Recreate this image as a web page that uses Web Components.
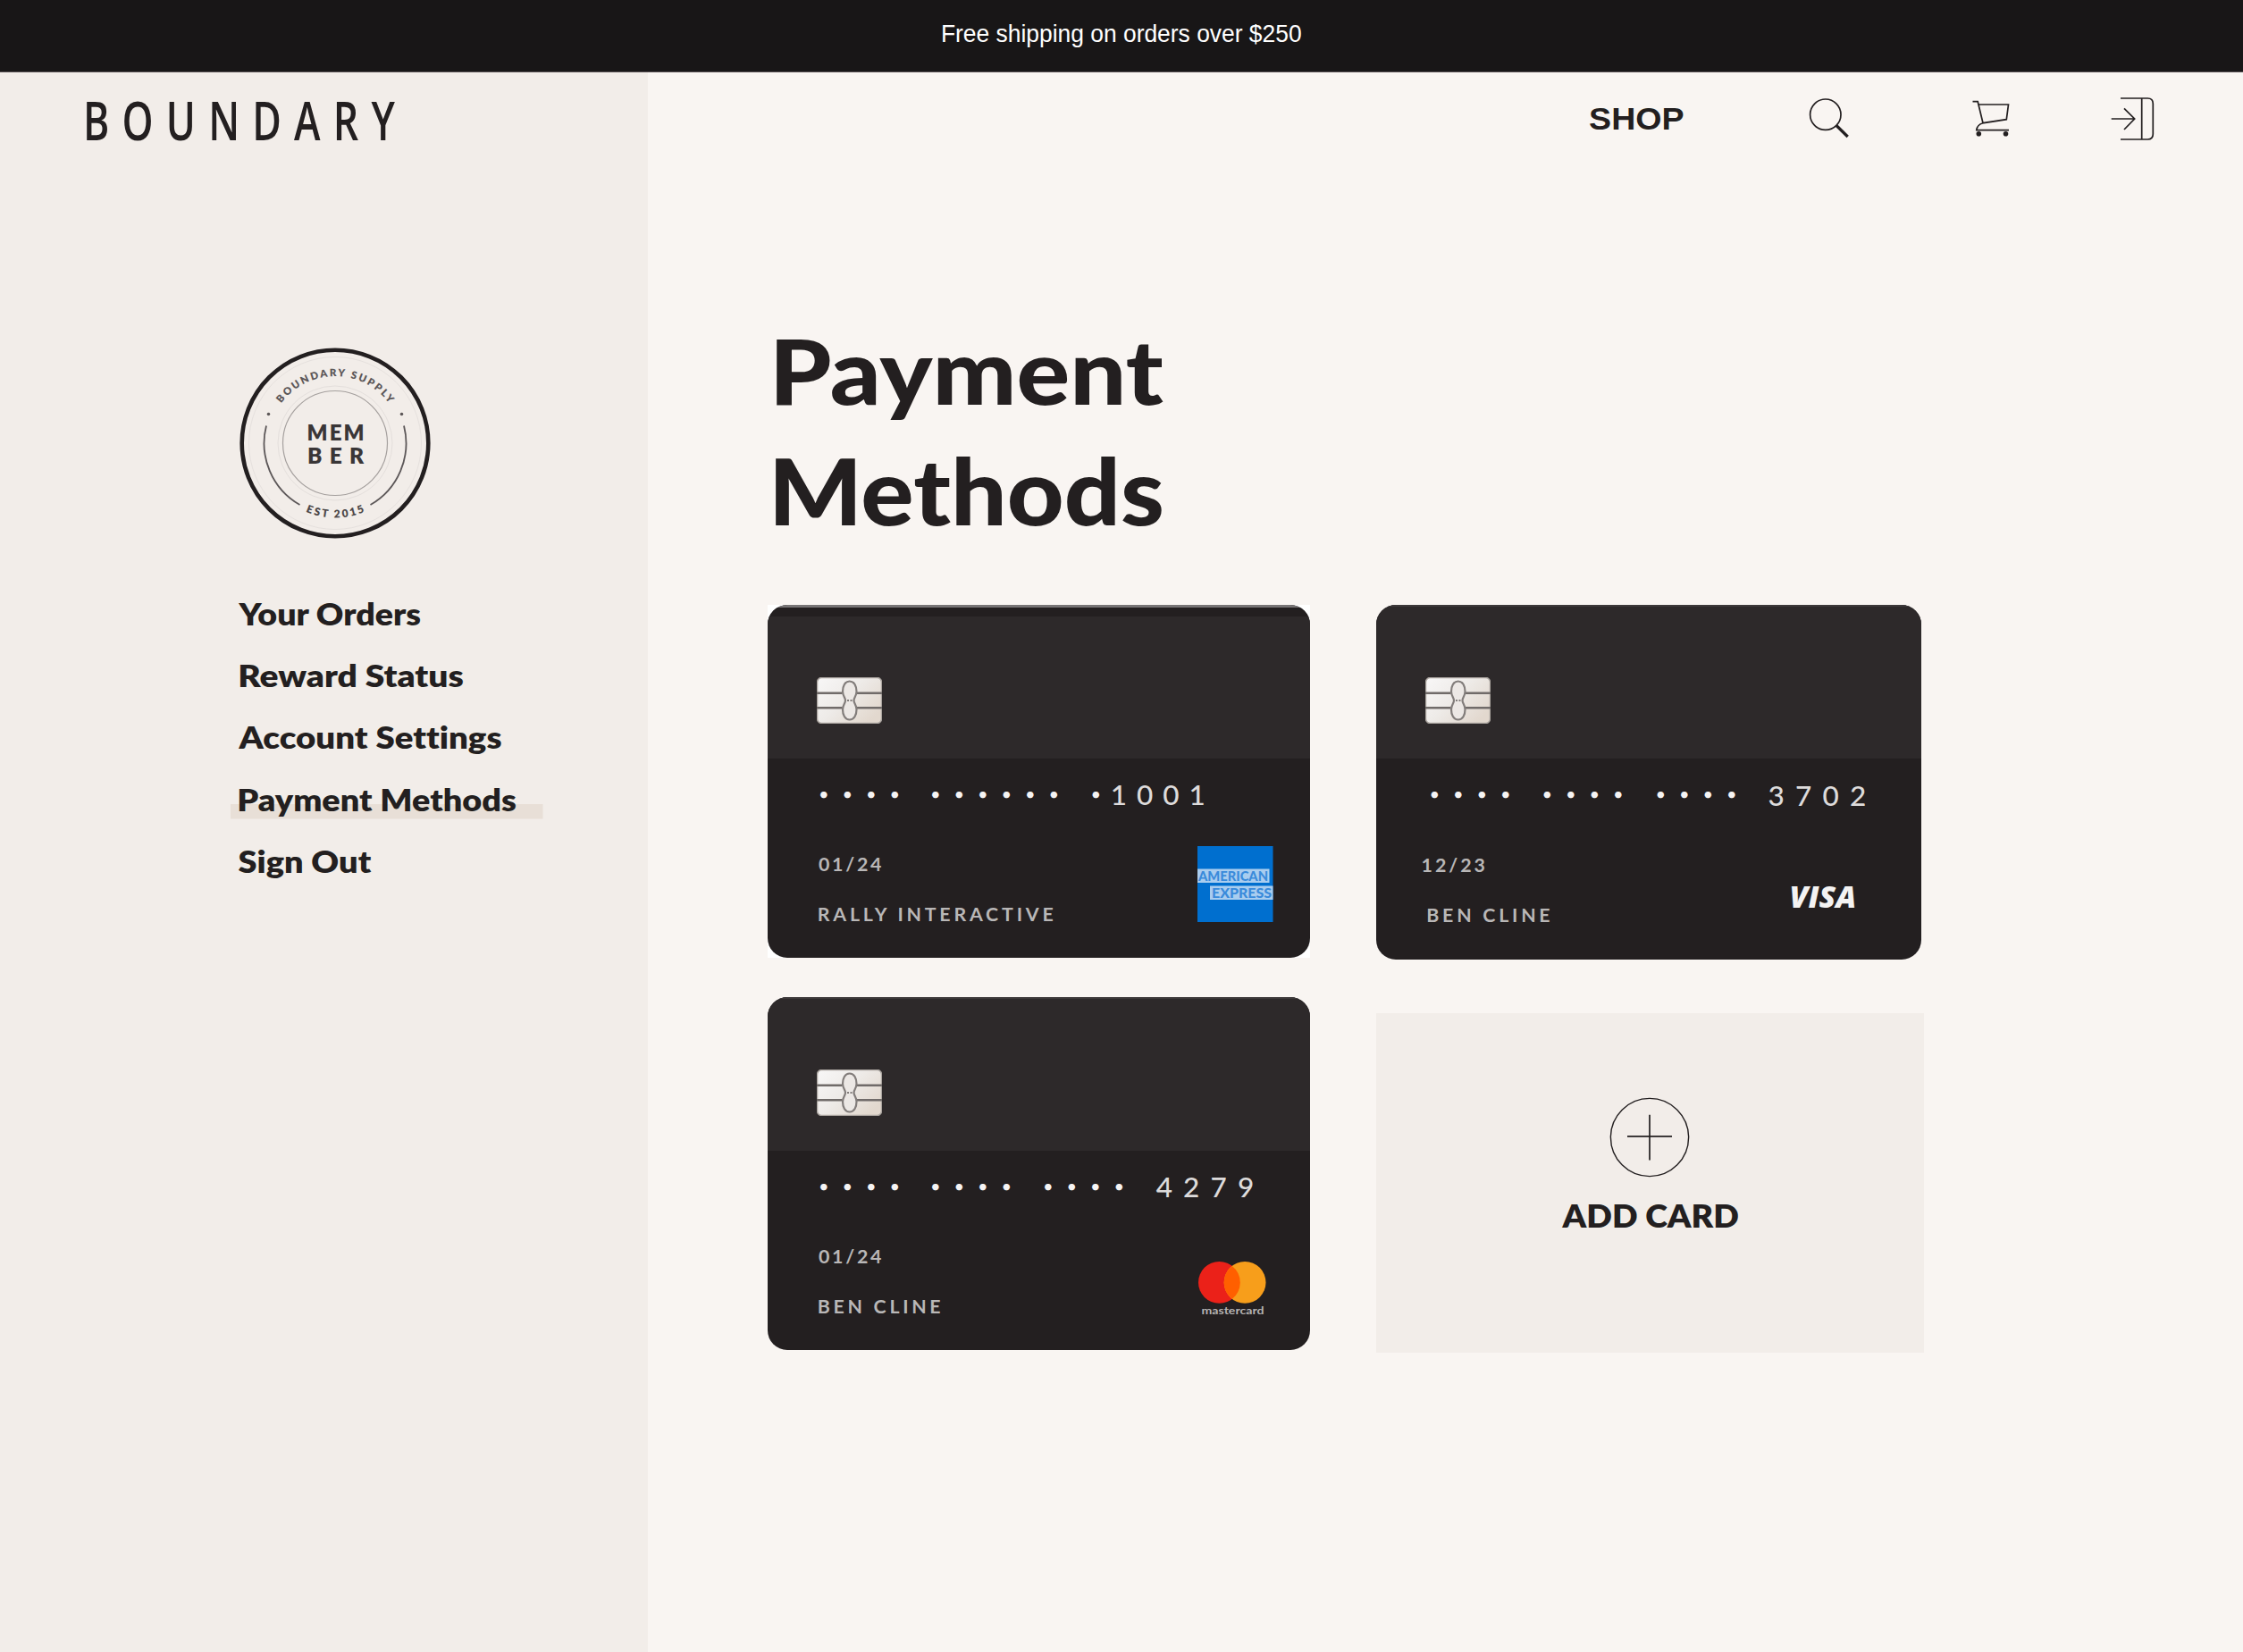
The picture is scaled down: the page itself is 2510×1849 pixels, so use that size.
<!DOCTYPE html>
<html lang="en">
<head>
<meta charset="utf-8">
<title>Boundary – Payment Methods</title>
<style>
body{margin:0;background:#f9f5f2;color:#231f20;font-family:Lato,"Open Sans",sans-serif}
</style>
</head>
<body>
<payment-page></payment-page>
<script>
const shadow = (el, html) => { el.attachShadow({mode:'open'}).innerHTML = html; };

/* One line of text whose box is its ink: cap height tall, w wide.
   With sx the glyphs keep that horizontal scale and tracking fills the width. */
class InkText extends HTMLElement {
  connectedCallback() {
    if (this.shadowRoot) return;
    const w = +this.getAttribute('w'), cap = +this.getAttribute('cap');
    const ref = this.getAttribute('ref') || 'H';
    const text = this.textContent.trim();
    const cs = getComputedStyle(this);
    const ctx = document.createElement('canvas').getContext('2d');
    const setFont = s => ctx.font = `${cs.fontStyle} ${cs.fontWeight} ${s}px ${cs.fontFamily}`;
    setFont(200);
    ctx.letterSpacing = '0.01px';
    const r = ctx.measureText(ref);
    const size = cap * 200 / (r.actualBoundingBoxAscent + r.actualBoundingBoxDescent);
    const k = size / 200;
    const m = ctx.measureText(text);
    const left = m.actualBoundingBoxLeft * k;
    const ink = (m.actualBoundingBoxLeft + m.actualBoundingBoxRight) * k;
    let sx = 1, ls = 0;
    if (this.hasAttribute('sx')) {
      sx = +this.getAttribute('sx');
      ls = text.length > 1 ? (w / sx - ink) / (text.length - 1) : 0;
    } else sx = w / ink;
    const asc = m.fontBoundingBoxAscent * k, desc = m.fontBoundingBoxDescent * k;
    const base = (cap + asc - desc) / 2;
    const ty = cap - r.actualBoundingBoxDescent * k - base;
    shadow(this, `<style>
      :host{display:block;flex:none;width:${w}px;height:${cap}px;white-space:nowrap}
      span{display:block;width:max-content;font-size:${size}px;line-height:${cap}px;letter-spacing:${ls}px;font-variant-ligatures:none;
        transform-origin:0 0;transform:translate(${left * sx}px,${ty}px) scaleX(${sx})}
      </style><span><slot></slot></span>`);
  }
}

class ShippingBanner extends HTMLElement {
  constructor() { super(); shadow(this, `<style>
    :host{display:flex;justify-content:center;box-sizing:border-box;height:81px;background:#181617;border-bottom:1px solid #574f51;color:#fff;
      font-family:"Liberation Sans",Inter,sans-serif}
    ink-text{margin-top:28px}
    </style><ink-text w="401" cap="19">${this.getAttribute('message')}</ink-text>`); }
}

class MemberBadge extends HTMLElement {
  constructor() { super(); shadow(this, `<style>
    :host{display:block;width:216px;height:216px}svg{display:block}text{font-family:Lato,sans-serif;font-weight:800;fill:#3a3637}
    </style><svg width="216" height="216" viewBox="-108 -108 216 216" fill="none">
    <defs><path id="a" d="M-75 0A75 75 0 0 1 75 0"/><path id="b" d="M-83.500 0A83.500 83.500 0 0 0 83.500 0"/></defs>
    <circle r="104.3" stroke="#231f20" stroke-width="4.6"/>
    <circle r="96.5" stroke="#e6e1de"/><circle r="64" stroke="#e4dfdc"/>
    <circle r="58.5" stroke="#a5a09e" stroke-width="1.2"/>
    <path d="M-77 -19.5A79.4 79.4 0 0 0 -39.5 69M77 -19.5A79.4 79.4 0 0 1 39.5 69" stroke="#5c5758" stroke-width="1.8"/>
    <circle cx="-74.5" cy="-32.5" r="1.8" fill="#5c5758"/><circle cx="74.5" cy="-32.5" r="1.8" fill="#5c5758"/>
    <text font-size="11.500" text-anchor="middle" style="fill:#5c5758" textLength="140"><textPath href="#a" startOffset="50%" textLength="140">BOUNDARY SUPPLY</textPath></text>
    <text font-size="12" text-anchor="middle" style="fill:#4c4748" textLength="68"><textPath href="#b" startOffset="50%" textLength="68">EST 2015</textPath></text>
    <text x="-31.5" y="-3.5" font-size="24" textLength="64">MEM</text>
    <text x="-31" y="23.3" font-size="24.5" textLength="63">BER</text>
    </svg>`); }
}

class AccountLink extends HTMLElement {
  constructor() { super();
    const x = this.getAttribute('x') || 0;
    shadow(this, `<style>
    :host{display:block;height:25.3px;margin-bottom:44.03px;font-weight:800}
    :host([active]){background:linear-gradient(#e8dfd7,#e8dfd7) 0 17.500px/349.5px 16.5px no-repeat;padding:0 0 9.5px 8.5px;margin-left:-8.5px;margin-bottom:34.53px}
    ink-text{margin-left:${x}px}
    </style><ink-text w="${this.getAttribute('w')}" cap="25.3">${this.getAttribute('label')}</ink-text>`); }
}

class AccountSidebar extends HTMLElement {
  constructor() { super(); shadow(this, `<style>
    :host{display:flex;flex-direction:column;flex:none;width:725px;background:#f2ede9;height:1768px}
    .logo{margin:33.500px 0 0 97px;font-family:"Open Sans",sans-serif;font-weight:600}
    member-badge{margin:231px 0 0 266.500px}
    nav{margin:70.700px 0 0 266.500px}
    </style>
    <ink-text class="logo" w="345" cap="42.500" sx=".75">BOUNDARY</ink-text>
    <member-badge></member-badge>
    <nav>
      <account-link w="204" label="Your Orders"></account-link>
      <account-link x="2" w="249" label="Reward Status"></account-link>
      <account-link w="293.7" label="Account Settings"></account-link>
      <account-link active x="1.6" w="309" label="Payment Methods"></account-link>
      <account-link w="148.3" label="Sign Out"></account-link>
    </nav>`); }
}

class SiteTools extends HTMLElement {
  constructor() { super(); shadow(this, `<style>
    :host{display:flex;align-items:flex-start;padding:24px 0 0 1054px;height:56px;font-weight:800}
    svg{display:block;flex:none;fill:none;stroke:#231f20;stroke-width:1.7}
    .shop{margin-top:15px;font-family:"Liberation Sans",sans-serif;font-weight:700}.s{margin-left:136.500px}.c{margin-left:134px}.e{margin-left:104px}
    </style>
    <ink-text class="shop" w="104.5" cap="25">SHOP</ink-text>
    <svg class="s" width="50" height="56" viewBox="2020 105 50 56"><circle cx="2042.8" cy="128.2" r="17.2"/><path d="M2055 140.5L2067.7 153" stroke-width="3.2"/></svg>
    <svg class="c" width="50" height="56" viewBox="2204 105 50 56"><path d="M2207.5 113.7H2213.2L2219 137.7L2245.3 133.7L2247.5 117H2214M2219 137.7Q2212.5 139.5 2211.8 145.6H2248"/><g fill="#231f20" stroke="none"><circle cx="2214.3" cy="149.8" r="2.8"/><circle cx="2244.5" cy="149.8" r="2.8"/></g></svg>
    <svg class="e" width="56" height="56" viewBox="2358 105 56 56" stroke-width="1.5"><path d="M2373 110H2403.3Q2409.3 110 2409.3 116V150Q2409.3 156 2403.3 156H2373M2396.7 110V156M2362.7 133H2388.5M2377 121.3L2388.7 133L2377 145"/></svg>`); }
}

const brands = {
  amex: `<svg width="85" height="86" viewBox="0 0 85 86"><rect width="84.500" height="85" fill="#006fcf"/>
    <rect y="25.5" width="80.5" height="15.5" fill="#a9cdef"/><rect x="14" y="44.500" width="70.500" height="15.500" fill="#a9cdef"/>
    <g font-family="Lato,sans-serif" font-weight="900" font-size="15.500" fill="#3a8bdb"><text x="1" y="38.700" textLength="78" lengthAdjust="spacingAndGlyphs">AMERICAN</text><text x="16" y="57.800" textLength="67" lengthAdjust="spacingAndGlyphs">EXPRESS</text></g></svg>`,
  visa: `<ink-text w="70" cap="23.500" style="margin-left:2px;font:italic 800 20px 'Open Sans',sans-serif;color:#f4f3f3">VISA</ink-text>`,
  mastercard: `<svg width="76" height="68" viewBox="0 0 76 68"><circle cx="23.4" cy="23.4" r="23.4" fill="#eb2119"/><circle cx="52.1" cy="23.4" r="23.4" fill="#f79e1b"/><path d="M37.750 4.920A23.400 23.400 0 0 1 37.750 41.880A23.400 23.400 0 0 1 37.750 4.920Z" fill="#ff5f00"/>
    <text x="3.500" y="58.500" font-family="Lato,sans-serif" font-weight="700" font-size="12" fill="#b5b3b3" textLength="70" lengthAdjust="spacingAndGlyphs">mastercard</text></svg>`
};

class CreditCard extends HTMLElement {
  constructor() { super();
    const a = n => this.getAttribute(n);
    /* groups: "count:left" pairs of masked digits, then the visible ones */
    let x = 0;
    const groups = a('groups').split(' ').map(g => {
      const [n, l] = g.split(':').map(Number), w = (n - 1) * 26.5 + 7.5;
      const s = `<ink-text ref="•" style="margin:${a('doty')}px 0 0 ${l - x}px" w="${w}" cap="7.5" sx="1">${'•'.repeat(n)}</ink-text>`;
      x = l + w; return s;
    }).join('');
    const [dw, dl] = a('date-box').split(' '), [nw, nl] = a('name-box').split(' ');
    const [lw, ll] = a('last-box').split(' ').map(Number);
    const [bx, by] = a('brand-at').split(' ');
    shadow(this, `<style>
    :host{display:block;width:${a('w')}px;height:${a('h')}px}
    .card{height:100%;border-radius:22px;overflow:hidden;background:#231f20;box-sizing:border-box;display:flex;flex-direction:column}
    .top{height:${a('split')}px;flex:none;background:#2d292a;box-sizing:border-box;padding:${a('chipy')}px 0 0 ${a('chipx')}px;border-top:2px solid #3d393a}
    :host([plate]){background:linear-gradient(#fff,#fff) 0 0/610px 398px no-repeat}
    :host([plate]) .top{border-top:3px solid #777475;background:linear-gradient(#231f20 10px,#2d292a 10px);padding-top:${a('chipy') - 1}px}
    .chip{display:block}
    .num{display:flex;height:82px;flex:none;color:#f6f4f4}
    .num ink-text:last-child{color:#dddbdb;font-weight:500}
    .foot{display:flex;flex:1;color:#b9b7b7}
    .foot>div{flex:none;width:${bx}px;font-weight:700}
    .foot>.brand{width:auto;margin-top:${by}px}.brand svg{display:block}
    </style>
    <div class="card">
      <div class="top"><svg class="chip" width="73" height="52" viewBox="0 0 73 52"><defs><linearGradient id="g" x2="1" y2=".7"><stop stop-color="#f8f7f7"/><stop offset=".5" stop-color="#eeebe8"/><stop offset="1" stop-color="#e2d8ce"/></linearGradient></defs>
        <rect x=".5" y=".5" width="72" height="51" rx="5" fill="url(#g)" stroke="#aaa49f" stroke-width="1.500"/>
        <path d="M0 17.700H28.500M45 17.700H73M0 34.300H28.500M45 34.300H73" stroke="#706b69" stroke-width="2.600"/>
        <path d="M36.700 4.500C42 4.500 44.500 10 44.500 16C44.500 21 41.500 22.500 41.500 26C41.500 29.500 44.500 31 44.500 36C44.500 42 42 47.500 36.700 47.500C31.500 47.500 29 42 29 36C29 31 32 29.500 32 26C32 22.500 29 21 29 16C29 10 31.500 4.500 36.700 4.500Z" fill="#ece8e5" stroke="#827d7b" stroke-width="2.200"/>
        <path d="M34 26H39.500" stroke="#827d7b" stroke-width="2" stroke-dasharray="2 1.500"/></svg></div>
      <div class="num">${groups}<ink-text style="margin:${+a('doty') - 7.5}px 0 0 ${ll - x}px" w="${lw}" cap="22.7" sx="1">${a('last')}</ink-text></div>
      <div class="foot"><div>
        <ink-text style="margin:${a('datey')}px 0 0 ${dl}px" w="${dw}" cap="15.500" sx="1">${a('date')}</ink-text>
        <ink-text style="margin:40.500px 0 0 ${nl}px" w="${nw}" cap="15.500" sx="1">${a('name')}</ink-text></div>
        <div class="brand">${brands[a('brand')]}</div></div>
    </div>`); }
}

class AddCard extends HTMLElement {
  constructor() { super(); shadow(this, `<style>
    :host{display:flex;flex-direction:column;align-items:center;width:613px;height:380.5px;background:#f2ede9;font-weight:800}
    svg{margin-top:94.500px;display:block}
    ink-text{margin-top:30.300px}
    </style><svg width="90" height="90" viewBox="-45 -45 90 90" fill="none" stroke="#231f20" stroke-width="1.400"><circle r="43.600"/><path d="M-25 -1.200H25M0 -25.200V25.500" stroke-width="1.700"/></svg>
    <ink-text w="197" cap="25.500">ADD CARD</ink-text>`); }
}

class PaymentPage extends HTMLElement {
  constructor() { super(); shadow(this, `<style>
    :host{display:block;width:2510px;height:1849px;overflow:hidden}
    .body{display:flex}
    h1{margin:218px 0 0 144px;font-weight:900;font-size:20px}
    h1 ink-text+ink-text{margin:60.500px 0 0 -1.500px}
    .cards{display:flex;gap:74px;margin:89.300px 0 0 134px}
    .col{display:flex;flex-direction:column}
    .col:first-child{gap:44.300px}.col:last-child{gap:60px}
    </style>
    <shipping-banner message="Free shipping on orders over $250"></shipping-banner>
    <div class="body">
      <account-sidebar></account-sidebar>
      <main>
        <site-tools></site-tools>
        <h1><ink-text w="432.500" cap="74">Payment</ink-text><ink-text w="432" cap="74.500">Methods</ink-text></h1>
        <section class="cards">
          <div class="col">
            <credit-card plate w="606.500" h="394.700" split="172" chipx="54.700" chipy="78.500" groups="4:59 6:184 1:363.500" doty="37.700"
              last="1001" last-box="101.500 386.200" date="01/24" date-box="69.500 57.500" datey="28.800" name="RALLY INTERACTIVE" name-box="262.500 57.500" brand="amex" brand-at="481 16"></credit-card>
            <credit-card w="606.500" h="395" split="171.400" chipx="54.700" chipy="78.500" groups="4:59 4:184 4:310" doty="38"
              last="4279" last-box="107.700 434.800" date="01/24" date-box="69.500 57.500" datey="29" name="BEN CLINE" name-box="135.500 57.500" brand="mastercard" brand-at="481.500 42"></credit-card>
          </div>
          <div class="col">
            <credit-card w="610.500" h="396.700" split="171.400" chipx="55.300" chipy="78.500" groups="4:62 4:188 4:315" doty="38.500"
              last="3702" last-box="107 440.300" date="12/23" date-box="69 52.500" datey="30" name="BEN CLINE" name-box="136 58.500" brand="visa" brand-at="463.500 62"></credit-card>
            <add-card></add-card>
          </div>
        </section>
      </main>
    </div>`); }
}

customElements.define('payment-page', PaymentPage);
customElements.define('shipping-banner', ShippingBanner);
customElements.define('account-sidebar', AccountSidebar);
customElements.define('member-badge', MemberBadge);
customElements.define('account-link', AccountLink);
customElements.define('site-tools', SiteTools);
customElements.define('credit-card', CreditCard);
customElements.define('add-card', AddCard);
customElements.define('ink-text', InkText);
</script>
</body>
</html>
